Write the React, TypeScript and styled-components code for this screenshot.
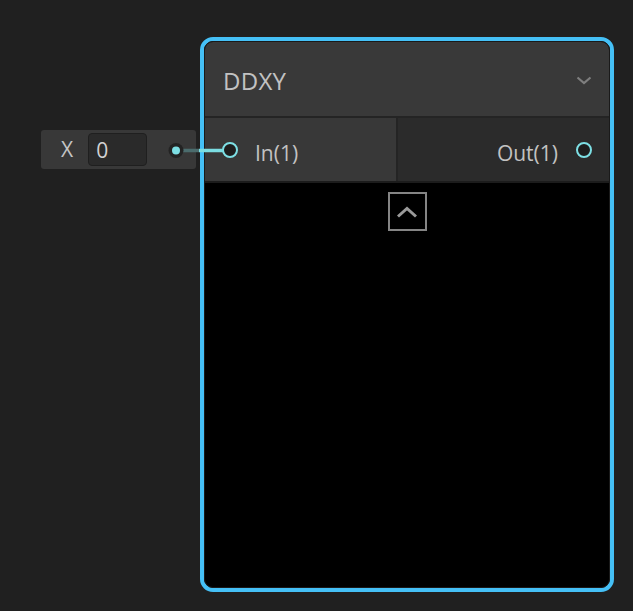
import React from "react";
import styled, { createGlobalStyle } from "styled-components";

const Global = createGlobalStyle`
  html, body { margin: 0; padding: 0; background: #202020; }
  body { font-family: "Open Sans", "Noto Sans", sans-serif; }
`;

const Canvas = styled.div`
  position: relative;
  width: 633px;
  height: 611px;
  background: #202020;
  overflow: hidden;
`;

const Wire = styled.svg`
  position: absolute;
  left: 0;
  top: 0;
  pointer-events: none;
  z-index: 2;
`;

const InputField = styled.div`
  position: absolute;
  left: 41px;
  top: 130px;
  width: 155px;
  height: 39px;
  box-sizing: border-box;
  background: #383838;
  border-radius: 3px;
  display: flex;
  align-items: center;
  padding-left: 20px;
  gap: 15px;
`;

const FieldLabel = styled.span`
  color: #c4c4c4;
  font-size: 21px;
  line-height: 1;
`;

const NumberBox = styled.div`
  width: 59px;
  height: 33px;
  box-sizing: border-box;
  background: #2a2a2a;
  border: 1px solid #1f1f1f;
  border-radius: 4px;
  color: #d2d2d2;
  font-size: 21px;
  display: flex;
  align-items: center;
  padding-left: 7px;
`;

const Node = styled.div`
  position: absolute;
  left: 200px;
  top: 37px;
  width: 414px;
  height: 555px;
  box-sizing: border-box;
  border: 4px solid #45c0f6;
  border-radius: 13px;
  z-index: 1;
`;

const Frame = styled.div`
  height: 100%;
  box-sizing: border-box;
  border: 1px solid #1a1a1a;
  border-radius: 9px;
  overflow: hidden;
  background: #000;
  display: flex;
  flex-direction: column;
`;

const Header = styled.div`
  height: 72px;
  flex: none;
  background: #393939;
  border-bottom: 2px solid #242424;
  display: flex;
  align-items: center;
  justify-content: space-between;
  padding: 2px 17px 0 18px;
`;

const Title = styled.span`
  color: #c2c2c2;
  font-size: 24px;
  letter-spacing: 0.3px;
`;

const PortsRow = styled.div`
  display: flex;
  height: 63px;
  flex: none;
  border-bottom: 2px solid #1c1c1c;
`;

const InputSide = styled.div`
  width: 193px;
  box-sizing: border-box;
  background: #383838;
  border-right: 2px solid #242424;
  display: flex;
  align-items: center;
  padding-left: 17px;
  gap: 17px;
`;

const OutputSide = styled.div`
  flex: 1;
  background: #2b2b2b;
  display: flex;
  align-items: center;
  justify-content: flex-end;
  padding-right: 17px;
  gap: 18px;
`;

const Port = styled.div`
  width: 16px;
  height: 16px;
  box-sizing: border-box;
  border: 2.5px solid #7ddfe4;
  border-radius: 50%;
  background: #1e1e1e;
  flex: none;
  margin-top: 1px;
`;

const PortLabel = styled.span`
  color: #c2c2c2;
  font-size: 21px;
  margin-top: 6px;
`;

const Body = styled.div`
  flex: 1;
  display: flex;
  justify-content: center;
  padding-top: 9px;
`;

const CollapseButton = styled.div`
  width: 39px;
  height: 39px;
  box-sizing: border-box;
  border: 2px solid #858585;
  display: flex;
  align-items: center;
  justify-content: center;
`;

export default function App() {
  return (
    <>
      <Global />
      <Canvas>
        <InputField>
          <FieldLabel>X</FieldLabel>
          <NumberBox>0</NumberBox>
        </InputField>
        <Node>
          <Frame>
            <Header>
              <Title>DDXY</Title>
              <svg width="16" height="9" viewBox="0 0 16 9">
                <path d="M1.5 1.5 L8 7 L14.5 1.5" fill="none" stroke="#7e7e7e" strokeWidth="2.2" />
              </svg>
            </Header>
            <PortsRow>
              <InputSide>
                <Port />
                <PortLabel>In(1)</PortLabel>
              </InputSide>
              <OutputSide>
                <PortLabel>Out(1)</PortLabel>
                <Port />
              </OutputSide>
            </PortsRow>
            <Body>
              <CollapseButton>
                <svg width="22" height="12" viewBox="0 0 22 12">
                  <path d="M2 10.5 L11 2.5 L20 10.5" fill="none" stroke="#9a9a9a" strokeWidth="3" />
                </svg>
              </CollapseButton>
            </Body>
          </Frame>
        </Node>
        <Wire width="633" height="611" viewBox="0 0 633 611">
          <line x1="176" y1="150.5" x2="199" y2="150.5" stroke="#4b6c6d" strokeWidth="3.5" />
          <line x1="199" y1="150.5" x2="223" y2="150.5" stroke="#7bdde2" strokeWidth="3.5" />
          <circle cx="176" cy="150.5" r="7.5" fill="#232323" />
          <circle cx="176" cy="150.5" r="4" fill="#7ddfe4" />
        </Wire>
      </Canvas>
    </>
  );
}
